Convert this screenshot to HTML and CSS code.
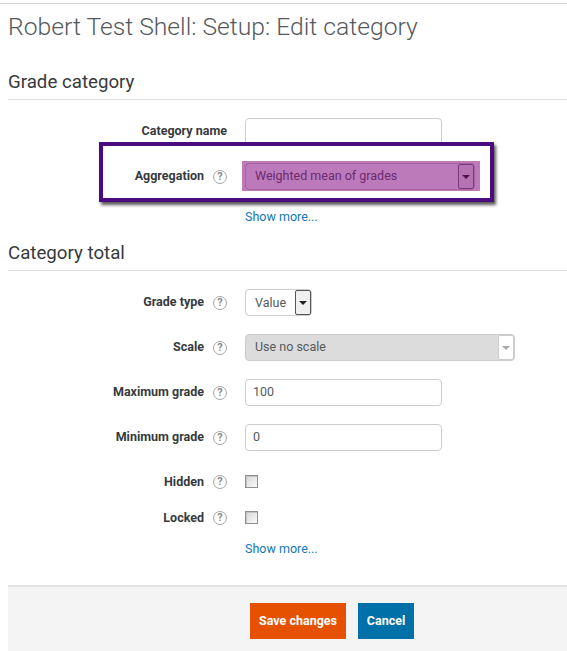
FILE: index.html
```html
<!DOCTYPE html>
<html lang="en">
<head>
    <meta charset="UTF-8">
    <link rel="stylesheet" href="styles.css">
    <title>Robert Test Shell: Setup: Edit category</title>
</head>
<body>
    <div id="page">
        <h2 class="title">Robert Test Shell: Setup: Edit category</h2>

        <h3 class="section first">Grade category</h3>
        <div class="row name-row">
            <div class="label">Category name</div>
            <input class="text" type="text">
        </div>
        <div class="row">
            <div class="label">Aggregation</div>
            <span class="help">?</span>
            <div class="select wide">Weighted mean of grades<span class="arrow"></span></div>
        </div>
        <a class="more more-one">Show more...</a>

        <h3 class="section second">Category total</h3>
        <div class="row type-row">
            <div class="label">Grade type</div>
            <span class="help">?</span>
            <div class="select small">Value<span class="arrow dark"></span></div>
        </div>
        <div class="row">
            <div class="label">Scale</div>
            <span class="help">?</span>
            <div class="select off">Use no scale<span class="arrow faint"></span></div>
        </div>
        <div class="row">
            <div class="label">Maximum grade</div>
            <span class="help">?</span>
            <input class="text" type="text" value="100">
        </div>
        <div class="row">
            <div class="label">Minimum grade</div>
            <span class="help">?</span>
            <input class="text" type="text" value="0">
        </div>
        <div class="row check-row hidden-row">
            <div class="label">Hidden</div>
            <span class="help">?</span>
            <span class="check"></span>
        </div>
        <div class="row check-row">
            <div class="label">Locked</div>
            <span class="help">?</span>
            <span class="check"></span>
        </div>
        <a class="more more-two">Show more...</a>

        <div class="buttons">
            <button class="btn save">Save changes</button>
            <button class="btn cancel">Cancel</button>
        </div>
    </div>

    <div class="callout"></div>
    <div class="tint"></div>
</body>
</html>
```

FILE: styles.css
```css
* {
    box-sizing: border-box;
}

html, body {
    margin: 0;
    height: 651px;
    overflow: hidden;
    background-color: #fff;
}

body {
    font-family: Roboto, "Liberation Sans", sans-serif;
    font-size: 12.5px;
    color: #373a3c;
}

#page {
    margin-top: 3px;
    border-top: 1px solid #d5d5d5;
    padding-left: 8px;
}

.title {
    margin: 8px 0 0;
    font-size: 24.7px;
    line-height: 30px;
    font-weight: 300;
    color: #55595c;
}

.section {
    margin: 0;
    height: 30px;
    font-size: 18.7px;
    line-height: 24px;
    font-weight: 400;
    border-bottom: 1px solid #dedede;
}

.first {
    margin-top: 28px;
}

.second {
    margin-top: 16px;
}

.row {
    display: flex;
    align-items: center;
    height: 28px;
    margin-bottom: 17px;
}

.name-row {
    margin-top: 18px;
    margin-bottom: 16px;
}

.type-row {
    margin-top: 17px;
}

.check-row {
    height: 20px;
    margin-bottom: 16px;
}

.hidden-row {
    margin-top: 20px;
}

.label {
    width: 196px;
    padding-bottom: 2px;
    text-align: right;
    font-weight: 700;
    flex-shrink: 0;
}

.check-row .label {
    padding-bottom: 0;
}

.name-row .label {
    width: 219px;
    margin-right: 18px;
    padding-bottom: 4px;
}

.help {
    width: 14px;
    height: 14px;
    margin: 1px 18px 0 9px;
    border: 1.5px solid #a5a5a5;
    border-radius: 50%;
    font-size: 11px;
    font-weight: 700;
    line-height: 11px;
    text-align: center;
    color: #8a8a8a;
    flex-shrink: 0;
}

.text {
    align-self: flex-end;
    width: 197px;
    height: 27px;
    padding: 0 7px 2px;
    border: 1px solid #ccc;
    border-radius: 4px;
    font-family: inherit;
    font-size: 12.5px;
    color: #55595c;
    background-color: #fff;
}

.name-row .text {
    height: 28px;
}

.select {
    display: flex;
    align-items: center;
    justify-content: space-between;
    height: 27px;
    padding-left: 9px;
    border: 1px solid #ccc;
    border-radius: 4px;
    color: #55595c;
    background-color: #fff;
}

.wide {
    width: 230px;
    padding-bottom: 2px;
}

.small {
    width: 67px;
}

.off {
    width: 270px;
    padding-bottom: 2px;
    background-color: #dcdcdc;
}

.arrow {
    position: relative;
    width: 16px;
    height: 25px;
    border: 1px solid #777;
    border-radius: 2px;
    background-color: #f0f0f0;
}

.wide .arrow,
.off .arrow {
    margin-top: 2px;
}

.arrow::after {
    content: "";
    position: absolute;
    left: 3px;
    top: 10px;
    border: 4px solid transparent;
    border-top-color: #222;
    border-bottom-width: 0;
}

.dark {
    border-color: #555;
}

.faint {
    border-color: #ccc;
    background-color: #fff;
}

.faint::after {
    border-top-color: #aaa;
}

.check {
    width: 13px;
    height: 13px;
    border: 1px solid #8f8f8f;
    box-shadow: inset 1px 1px 0 #c4c4c4;
    background: linear-gradient(135deg, #d6d6d6, #fbfbfb);
}

.more {
    display: block;
    margin-left: 237px;
    line-height: 16px;
    color: #1177b8;
}

.more-one {
    margin-top: 19px;
}

.more-two {
    margin-top: -2px;
}

.buttons {
    display: flex;
    gap: 12px;
    height: 80px;
    margin-top: 28px;
    padding: 16px 0 0 242px;
    border-top: 2px solid #e3e3e3;
    background-color: #f4f4f4;
}

.btn {
    height: 36px;
    padding: 0 0 1px;
    border: 0;
    font-family: inherit;
    font-size: 12.5px;
    font-weight: 700;
    white-space: nowrap;
    color: #fff;
}

.save {
    width: 96px;
    background-color: #e65100;
}

.cancel {
    width: 56px;
    background-color: #0070a8;
}

.callout {
    position: absolute;
    left: 99px;
    top: 142px;
    width: 395px;
    height: 60px;
    border: 4px solid #4a0a80;
    box-shadow: 2px 3px 3px rgba(0, 0, 0, 0.65);
}

.tint {
    position: absolute;
    left: 242px;
    top: 161px;
    width: 238px;
    height: 30px;
    background-color: rgba(128, 0, 125, 0.52);
}
```
